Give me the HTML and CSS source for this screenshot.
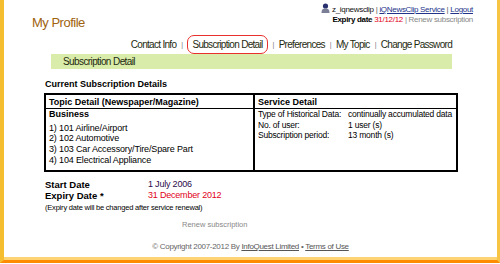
FILE: index.html
```html
<!DOCTYPE html>
<html lang="en">
<head>
  <meta charset="UTF-8">
  <title>My Profile</title>
  <link rel="stylesheet" href="styles.css">
</head>
<body>

  <div class="frame">
    <div class="top">
      <h1 class="title">My Profile</h1>
      <div class="account">
        <div class="account-line">
          <svg class="user-icon" width="9" height="10" viewBox="0 0 9 10">
            <circle cx="4.5" cy="3" r="2.6" fill="#28306e"/>
            <path d="M0.5 10 C0.5 6 2 5.4 4.5 5.4 C7 5.4 8.5 6 8.5 10 Z" fill="#7a7f96"/>
          </svg>
          <span class="user">z_iqnewsclip</span>
          <span class="sep">|</span>
          <a href="#">iQNewsClip Service</a>
          <span class="sep">|</span>
          <a href="#">Logout</a>
        </div>
        <div class="account-line">
          <b>Expiry date</b> <span class="red">31/12/12</span>
          <span class="muted">| Renew subscription</span>
        </div>
      </div>
    </div>

    <nav class="tabs">
      <a href="#">Contact Info</a>
      <span class="tab-sep">|</span>
      <a href="#" class="active">Subscription Detail</a>
      <span class="tab-sep">|</span>
      <a href="#">Preferences</a>
      <span class="tab-sep">|</span>
      <a href="#">My Topic</a>
      <span class="tab-sep">|</span>
      <a href="#">Change Password</a>
    </nav>

    <div class="section-bar">Subscription Detail</div>

    <div class="content">
      <h2 class="heading">Current Subscription Details</h2>

      <table class="detail">
        <tr>
          <th class="col-topic">Topic Detail (Newspaper/Magazine)</th>
          <th>Service Detail</th>
        </tr>
        <tr>
          <td class="topics">
            <div class="group">Business</div>
            <div>1) 101 Airline/Airport</div>
            <div>2) 102 Automotive</div>
            <div>3) 103 Car Accessory/Tire/Spare Part</div>
            <div>4) 104 Electrical Appliance</div>
          </td>
          <td>
            <div class="service-row"><span class="label">Type of Historical Data:</span><span>continually accumulated data</span></div>
            <div class="service-row"><span class="label">No. of user:</span><span>1 user (s)</span></div>
            <div class="service-row"><span class="label">Subscription period:</span><span>13 month (s)</span></div>
          </td>
        </tr>
      </table>

      <div class="dates">
        <div class="date-row"><span class="date-label">Start Date</span><span class="date-value">1 July 2006</span></div>
        <div class="date-row"><span class="date-label">Expiry Date *</span><span class="date-value red">31 December 2012</span></div>
      </div>
      <p class="note">(Expiry date will be changed after service renewal)</p>
      <p class="renew"><a href="#">Renew subscription</a></p>
    </div>

    <div class="footer">
      &copy; Copyright 2007-2012 By <a href="#">InfoQuest Limited</a> &bull; <a href="#">Terms of Use</a>
    </div>
  </div>

</body>
</html>
```

FILE: styles.css
```css
body {
  margin: 0;
  background: #fff;
  font-family: 'Liberation Sans', Arial, sans-serif;
  color: #000;
}

.frame {
  width: 500px;
  height: 263px;
  box-sizing: border-box;
  border-left: 4px solid #f5bd30;
  border-right: 3px solid #f7c444;
  border-bottom: 3px solid #ff8c00;
  box-shadow: inset 0 -3px 0 #fdd374;
  overflow: hidden;
}

.top {
  display: flex;
  justify-content: space-between;
  align-items: flex-start;
  height: 35px;
}

.title {
  margin: 14px 0 0 28px;
  font-weight: normal;
  font-size: 13px;
  line-height: 18px;
  letter-spacing: -0.5px;
  color: #a0620e;
}

.account {
  margin: 3px 24px 0 0;
  font-size: 8px;
  line-height: 10px;
  text-align: right;
  letter-spacing: -0.3px;
}

.account-line a {
  color: #23338a;
}

.user-icon {
  vertical-align: -1px;
}

.user {
  color: #111;
}

.sep {
  color: #555;
}

.red {
  color: #e2001a;
}

.muted {
  color: #888;
}

.tabs {
  display: flex;
  justify-content: flex-end;
  align-items: center;
  height: 19px;
  padding-right: 45px;
  font-size: 10px;
  letter-spacing: -0.7px;
}

.tabs a {
  color: #1e2a10;
  text-decoration: none;
  line-height: 17px;
}

.tabs a.active {
  border: 1px solid #e8302c;
  border-radius: 7px;
  padding: 0 4px;
}

.tab-sep {
  margin: 0 5px;
  color: #777;
  font-size: 7px;
}

.section-bar {
  margin: 0 45px 0 47px;
  height: 15px;
  padding-left: 12px;
  background: #d9ecaa;
  font-size: 10px;
  line-height: 15px;
  letter-spacing: -0.6px;
  color: #1e2a10;
}

.content {
  padding: 0 39px 0 40px;
  font-size: 9px;
}

.heading {
  margin: 9px 0 3px 1px;
  font-size: 9px;
  line-height: 12px;
}

.detail {
  width: 100%;
  border-collapse: collapse;
  border: 2px solid #000;
  font-size: 8.5px;
  letter-spacing: -0.2px;
  white-space: nowrap;
}

.detail th {
  text-align: left;
  height: 13px;
  padding: 0 3px;
  border-bottom: 1px solid #000;
  font-size: 9px;
  letter-spacing: 0;
}

.detail td {
  vertical-align: top;
  padding: 0 3px 3px;
  line-height: 10.7px;
  height: 58px;
}

.detail td.topics {
  font-size: 9px;
  letter-spacing: -0.15px;
}

.detail .col-topic,
.detail td:first-child {
  width: 201px;
  border-right: 2px solid #000;
}

.group {
  font-weight: bold;
  margin-bottom: 3px;
  letter-spacing: 0;
}

.service-row {
  display: flex;
}

.label {
  width: 90px;
}

.dates {
  margin: 7px 0 0 1px;
  font-size: 9.5px;
  line-height: 11px;
}

.date-row {
  display: flex;
}

.date-label {
  width: 103px;
  font-weight: bold;
}

.date-value {
  font-size: 9px;
  color: #2a0a4a;
  letter-spacing: -0.2px;
}

.date-value.red {
  color: #e2001a;
}

.note {
  margin: 1px 0 0 1px;
  font-size: 7.5px;
  line-height: 11px;
  letter-spacing: -0.2px;
}

.renew {
  margin: 6px 0 0 138px;
  font-size: 7.5px;
  line-height: 11px;
}

.renew a {
  color: #888;
  text-decoration: none;
}

.footer {
  margin-top: 11px;
  text-align: center;
  font-size: 8px;
  line-height: 11px;
  color: #666;
  letter-spacing: -0.3px;
}

.footer a {
  color: #555;
}
```
